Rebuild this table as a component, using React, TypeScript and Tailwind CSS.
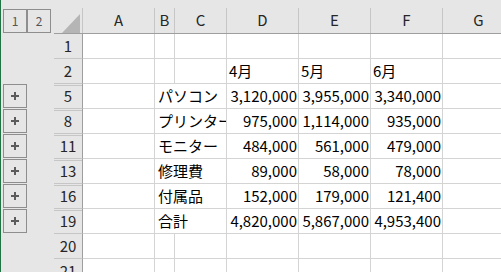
import React from "react";

type Row = {
  n: number;
  collapsed?: boolean;
  label?: string;
  d?: string;
  e?: string;
  f?: string;
  month?: boolean;
};

const rows: Row[] = [
  { n: 1 },
  { n: 2, d: "4月", e: "5月", f: "6月", month: true },
  { n: 5, collapsed: true, label: "パソコン", d: "3,120,000", e: "3,955,000", f: "3,340,000" },
  { n: 8, collapsed: true, label: "プリンター", d: "975,000", e: "1,114,000", f: "935,000" },
  { n: 11, collapsed: true, label: "モニター", d: "484,000", e: "561,000", f: "479,000" },
  { n: 13, collapsed: true, label: "修理費", d: "89,000", e: "58,000", f: "78,000" },
  { n: 16, collapsed: true, label: "付属品", d: "152,000", e: "179,000", f: "121,400" },
  { n: 19, collapsed: true, label: "合計", d: "4,820,000", e: "5,867,000", f: "4,953,400" },
  { n: 20 },
  { n: 21 },
];

const font = { fontFamily: "'Noto Sans CJK JP', 'Noto Sans', sans-serif" };

function PlusButton() {
  return (
    <div className="w-[24px] h-[24px] border border-[#8e8e8e] flex items-center justify-center">
      <svg width="8" height="8" viewBox="0 0 8 8">
        <rect x="3" y="0" width="2" height="8" fill="#5c5c5c" />
        <rect x="0" y="3" width="8" height="2" fill="#5c5c5c" />
      </svg>
    </div>
  );
}

function HeaderCell({ label, w }: { label: string; w: string }) {
  return (
    <div className={`${w} shrink-0 h-full border-r border-[#c6c6c6] flex items-center justify-center text-[15px] text-[#262626]`}>
      {label}
    </div>
  );
}

function NumCell({ v, w, left }: { v?: string; w: string; left?: boolean }) {
  return (
    <div
      className={`${w} shrink-0 h-full border-r border-[#d4d4d4] flex items-center whitespace-nowrap overflow-hidden text-[15px] text-black ${
        left ? "justify-start pl-[2px]" : "justify-end pr-[1px]"
      }`}
    >
      {v}
    </div>
  );
}

export default function App() {
  return (
    <div className="w-[501px] h-[272px] overflow-hidden bg-[#e6e6e6] border-l border-[#217346] flex flex-col" style={font}>
      {/* column outline strip */}
      <div className="h-[8px] shrink-0" />

      {/* column header row */}
      <div className="h-[26px] shrink-0 flex">
        <div className="w-[53px] shrink-0 flex pl-[2px] pt-[1px]">
          <div className="w-[24px] h-[24px] border border-[#8e8e8e] flex items-center justify-center text-[12px] text-[#555]">1</div>
          <div className="w-[24px] h-[24px] border border-[#8e8e8e] flex items-center justify-center text-[12px] text-[#555]">2</div>
        </div>
        <div className="flex flex-1 border-b border-[#9e9e9e]">
          <div className="w-[29px] shrink-0 h-full border-r border-[#c6c6c6] flex items-end justify-end pr-[2px]">
            <svg width="18" height="19" viewBox="0 0 18 19">
              <polygon points="18,0 18,19 0,19" fill="#b5b5b5" />
            </svg>
          </div>
          <HeaderCell label="A" w="w-[72px]" />
          <HeaderCell label="B" w="w-[20px]" />
          <HeaderCell label="C" w="w-[52px]" />
          <HeaderCell label="D" w="w-[72px]" />
          <HeaderCell label="E" w="w-[72px]" />
          <HeaderCell label="F" w="w-[72px]" />
          <HeaderCell label="G" w="w-[72px]" />
        </div>
      </div>

      {/* worksheet rows */}
      {rows.map((r) => (
        <div key={r.n} className="h-[25px] shrink-0 flex">
          <div className="w-[53px] shrink-0 pl-[2px]">{r.collapsed && <PlusButton />}</div>
          <div
            className={`w-[29px] shrink-0 h-full border-r border-b border-r-[#9e9e9e] border-b-[#c6c6c6] flex items-center justify-center text-[15px] text-[#262626] ${
              r.collapsed ? "shadow-[inset_0_1px_0_#e6e6e6,inset_0_2px_0_#c6c6c6]" : ""
            }`}
          >
            {r.n}
          </div>
          <div className="flex flex-1 bg-white border-b border-[#d4d4d4]">
            <div className="w-[72px] shrink-0 h-full border-r border-[#d4d4d4]" />
            {r.label ? (
              <div className="w-[72px] shrink-0 h-full border-r border-[#d4d4d4] flex items-center pl-[3px] whitespace-nowrap overflow-hidden text-[15px] text-black">
                {r.label}
              </div>
            ) : (
              <>
                <div className="w-[20px] shrink-0 h-full border-r border-[#d4d4d4]" />
                <div className="w-[52px] shrink-0 h-full border-r border-[#d4d4d4]" />
              </>
            )}
            <NumCell v={r.d} w="w-[72px]" left={r.month} />
            <NumCell v={r.e} w="w-[72px]" left={r.month} />
            <NumCell v={r.f} w="w-[72px]" left={r.month} />
            <div className="w-[72px] shrink-0 h-full border-r border-[#d4d4d4]" />
          </div>
        </div>
      ))}
    </div>
  );
}
